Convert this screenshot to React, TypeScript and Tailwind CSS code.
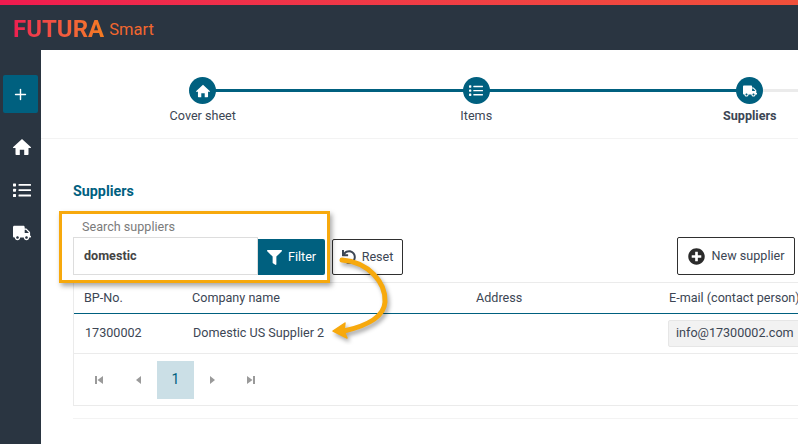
import { FaFilter, FaPlusCircle, FaTruck, FaUndo } from "react-icons/fa";
import { FiPlus } from "react-icons/fi";

const HomeIcon = ({ size }: { size: number }) => (
  <svg width={size} height={size} viewBox="0 0 18 16" fill="currentColor">
    <path d="M9 0L18 8.200C18.200 8.700 17.800 9 17.400 9H15.500V15.200C15.500 15.700 15.200 16 14.700 16H11.200V10.800H6.800V16H3.300C2.800 16 2.500 15.700 2.500 15.200V9H.6C.2 9-.2 8.700 0 8.200Z" />
  </svg>
);

const ListIcon = ({ size }: { size: number }) => (
  <svg width={size} height={size * 0.8} viewBox="0 0 18 14.400" fill="currentColor">
    <rect x="0" y="0.400" width="3" height="3" rx="0.600" />
    <rect x="0" y="5.700" width="3" height="3" rx="0.600" />
    <rect x="0" y="11" width="3" height="3" rx="0.600" />
    <rect x="5.500" y="1" width="12.500" height="1.800" rx="0.500" />
    <rect x="5.500" y="6.300" width="12.500" height="1.800" rx="0.500" />
    <rect x="5.500" y="11.600" width="12.500" height="1.800" rx="0.500" />
  </svg>
);

const steps = [
  { label: "Cover sheet", icon: <HomeIcon size={14} />, line: "bg-[#00607f]" },
  { label: "Items", icon: <ListIcon size={14} />, line: "bg-[#00607f]" },
  { label: "Suppliers", icon: <FaTruck size={14} />, line: "bg-[#ebebeb]", active: true },
];

const PagerIcon = ({ type }: { type: string }) => (
  <svg width="10" height="10" viewBox="0 0 10 10" fill="#9a9a9a">
    {type === "first" && <path d="M1 1h2v8H1zM9 1v8L3.500 5z" />}
    {type === "prev" && <path d="M8 1v8L3 5z" />}
    {type === "next" && <path d="M2 1v8l5-4z" />}
    {type === "last" && <path d="M7 1h2v8H7zM1 1v8l5.500-4z" />}
  </svg>
);

const App = () => {
  return (
    <div className="w-[798px] h-[444px] overflow-hidden bg-white relative text-[12.600px] text-[#3c4654] font-['Roboto',sans-serif]">
      <div className="h-[5px] bg-gradient-to-r from-[#ef1a4f] to-[#f0503a]" />
      <div className="h-[45px] bg-[#2a3541] flex items-center pl-[13px] pt-[2px]">
        <span className="text-[24px] leading-none font-bold bg-gradient-to-r from-[#ee1c50] to-[#f47b20] bg-clip-text text-transparent">FUTURA</span>
        <span className="text-[16.500px] leading-none text-[#f2672e] ml-[5px] mt-[3px]">Smart</span>
      </div>

      <div className="flex h-[394px]">
        <div className="w-[41px] shrink-0 bg-[#2a3541] flex flex-col items-start pt-[25px]">
          <div className="w-[35px] h-[38px] ml-[3px] bg-[#00607f] rounded-[2px] flex items-center justify-center text-white">
            <FiPlus size={17} strokeWidth={2} />
          </div>
          <div className="w-[44px] flex flex-col items-center mt-[25px] text-white">
            <HomeIcon size={18} />
            <div className="mt-[27px]"><ListIcon size={18} /></div>
            <div className="mt-[27px]"><FaTruck size={18} /></div>
          </div>
        </div>

        <div className="flex-1 min-w-0 overflow-hidden">
          <div className="h-[89px] border-b border-[#f3f3f3] pl-[25px] pt-[27px]">
            <div className="flex w-[820px]">
              {steps.map((s) => (
                <div key={s.label} className="w-[273.500px] shrink-0 flex flex-col items-center relative">
                  <div className={`absolute top-[12px] left-1/2 w-full h-[3px] ${s.line}`} />
                  <div className="relative w-[27px] h-[27px] rounded-full bg-[#00607f] text-white flex items-center justify-center">
                    {s.icon}
                  </div>
                  <div className={`mt-[4px] leading-[16px] ${s.active ? "font-bold" : ""}`}>{s.label}</div>
                </div>
              ))}
            </div>
          </div>

          <div className="pl-[32px]">
            <div className="mt-[43px] h-[18px] leading-[18px] text-[14.300px] font-bold text-[#00607f]">Suppliers</div>
            <div className="mt-[19px] pl-[9px] h-[16px] leading-[16px] text-[#7b7b7b]">Search suppliers</div>
            <div className="flex items-end mt-[2px] h-[38px]">
              <div className="w-[185px] h-[38px] border border-[#dddddd] pl-[10px] flex items-center font-bold text-[#444444]">domestic</div>
              <div className="w-[67px] h-[36px] bg-[#00607f] rounded-r-[2px] text-white flex items-center justify-center gap-[6px]">
                <FaFilter size={15} />
                <span>Filter</span>
              </div>
              <div className="ml-[7px] w-[71px] h-[36px] border border-[#2f2f2f] rounded-[2px] flex items-center justify-center gap-[6px]">
                <FaUndo size={14} />
                <span>Reset</span>
              </div>
              <div className="ml-[274px] w-[118px] h-[38px] border border-[#2f2f2f] rounded-[2px] flex items-center justify-center gap-[7px] shrink-0">
                <FaPlusCircle size={17} className="text-[#2b2b2b]" />
                <span>New supplier</span>
              </div>
            </div>

            <div className="mt-[7px] w-[740px] border-l border-b border-[#ebebeb] border-t">
              <div className="flex h-[31px] items-center border-b border-b-[#00607f]">
                <div className="w-[118px] pl-[10px] shrink-0">BP-No.</div>
                <div className="w-[284px] shrink-0">Company name</div>
                <div className="w-[193px] shrink-0">Address</div>
                <div className="whitespace-nowrap">E-mail (contact person)</div>
              </div>
              <div className="flex h-[40px] items-center border-b border-[#ebebeb]">
                <div className="w-[119px] pl-[11px] shrink-0">17300002</div>
                <div className="w-[475px] shrink-0">Domestic US Supplier 2</div>
                <div className="w-[146px] h-[27px] bg-[#f2f2f2] border border-[#e6e6e6] rounded-[2px] pl-[7px] flex items-center whitespace-nowrap">info@17300002.com</div>
              </div>
              <div className="h-[51px] flex items-center pl-[6px]">
                <div className="w-[38px] flex justify-center"><PagerIcon type="first" /></div>
                <div className="w-[39px] flex justify-center"><PagerIcon type="prev" /></div>
                <div className="w-[37px] h-[38px] bg-[#cbdfe6] text-[#00607f] text-[14px] flex items-center justify-center">1</div>
                <div className="w-[38px] flex justify-center"><PagerIcon type="next" /></div>
                <div className="w-[38px] flex justify-center"><PagerIcon type="last" /></div>
              </div>
            </div>
            <div className="mt-[12px] border-t border-[#f3f3f3]" />
          </div>
        </div>
      </div>

      {/* orange callout over the search box */}
      <div className="absolute left-[59px] top-[211px] w-[271px] h-[72px] border-[3px] border-[#f7a90d] shadow-[2px_3px_5px_rgba(0,0,0,0.35)]" />
      <svg className="absolute left-[330px] top-[250px]" width="70" height="95" viewBox="0 0 70 95" fill="none">
        <g style={{ filter: "drop-shadow(2px 3px 2px rgba(0,0,0,0.35))" }}>
          <path d="M12 10C38 12 56 32 55 52C54 68 36 76 14 81" stroke="#f7a90d" strokeWidth="5" strokeLinecap="round" />
          <path d="M3 81L15 73L14 81L17 88Z" fill="#f7a90d" stroke="#f7a90d" strokeWidth="1.500" strokeLinejoin="round" />
        </g>
      </svg>
    </div>
  );
};

export default App;
